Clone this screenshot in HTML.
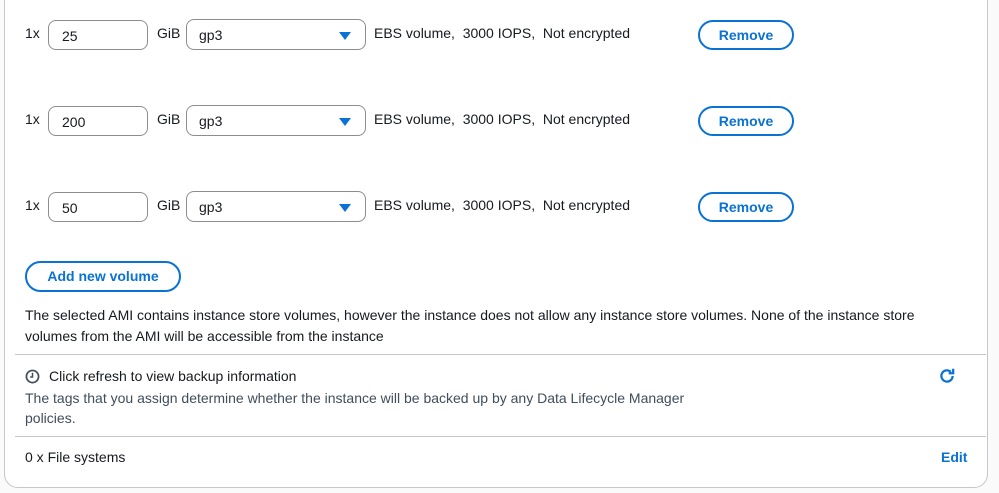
<!DOCTYPE html><html><head><style>
body{margin:0;width:999px;height:493px;background:#fafafa;font-family:"Liberation Sans",sans-serif;font-size:14px;color:#16191f;position:relative;overflow:hidden}
.card{position:absolute;left:4px;top:-20px;width:982px;height:506px;background:#fff;border:1px solid #c6c6cd;border-radius:14px}
.a{position:absolute}
.inp{position:absolute;width:100px;height:30px;border:1px solid #8c8c94;border-radius:8px;box-sizing:border-box;padding-left:13px;line-height:30px}
.sel{position:absolute;width:180px;height:31px;border:1px solid #8c8c94;border-radius:8px;box-sizing:border-box;padding-left:12px;line-height:31px}
.tri{position:absolute;right:14px;top:12px;width:0;height:0;border-left:6px solid transparent;border-right:6px solid transparent;border-top:8px solid #0972d3}
.btn{position:absolute;height:30px;border:2px solid #0972d3;border-radius:16px;box-sizing:border-box;color:#0972d3;font-weight:bold;text-align:center;line-height:26px;font-size:14px}
.hr{position:absolute;left:15px;width:971px;height:1px;background:#c6c6cd}
.g{color:#414d5c}
</style></head><body>
<div class="card"></div>
<div class="a" style="left:25px;top:25px">1x</div><div class="inp" style="left:48px;top:20px">25</div><div class="a" style="left:157px;top:25px">GiB</div><div class="sel" style="left:186px;top:19px">gp3<div class="tri"></div></div><div class="a" style="left:374px;top:25px">EBS volume,&nbsp; 3000 IOPS,&nbsp; Not encrypted</div><div class="btn" style="left:698px;top:20px;width:96px">Remove</div>
<div class="a" style="left:25px;top:111px">1x</div><div class="inp" style="left:48px;top:106px">200</div><div class="a" style="left:157px;top:111px">GiB</div><div class="sel" style="left:186px;top:105px">gp3<div class="tri"></div></div><div class="a" style="left:374px;top:111px">EBS volume,&nbsp; 3000 IOPS,&nbsp; Not encrypted</div><div class="btn" style="left:698px;top:106px;width:96px">Remove</div>
<div class="a" style="left:25px;top:197px">1x</div><div class="inp" style="left:48px;top:192px">50</div><div class="a" style="left:157px;top:197px">GiB</div><div class="sel" style="left:186px;top:191px">gp3<div class="tri"></div></div><div class="a" style="left:374px;top:197px">EBS volume,&nbsp; 3000 IOPS,&nbsp; Not encrypted</div><div class="btn" style="left:698px;top:192px;width:96px">Remove</div>
<div class="btn" style="left:25px;top:261px;width:156px;height:31px;line-height:27px">Add new volume</div>
<div class="a" style="left:25px;top:305px;line-height:21px;width:930px">The selected AMI contains instance store volumes, however the instance does not allow any instance store volumes. None of the instance store volumes from the AMI will be accessible from the instance</div>
<div class="hr" style="top:354px"></div>
<svg class="a" style="left:25px;top:369px" width="15" height="15" viewBox="0 0 16 16"><circle cx="8" cy="8" r="6.5" fill="none" stroke="#414d5c" stroke-width="1.8"/><path d="M8 4v4.5h-2.5" fill="none" stroke="#414d5c" stroke-width="1.6"/></svg>
<div class="a" style="left:49px;top:368px">Click refresh to view backup information</div>
<div class="a g" style="left:25px;top:388px;line-height:20px;width:690px">The tags that you assign determine whether the instance will be backed up by any Data Lifecycle Manager policies.</div>
<svg class="a" style="left:938px;top:367px" width="18" height="18" viewBox="0 0 16 16"><path d="M13 8a5 5 0 1 1-1.6-3.7" fill="none" stroke="#0972d3" stroke-width="2"/><path d="M13.5 1.5v4h-4" fill="none" stroke="#0972d3" stroke-width="2"/></svg>
<div class="hr" style="top:436px"></div>
<div class="a" style="left:25px;top:449px">0 x File systems</div>
<div class="a" style="left:941px;top:449px;color:#0972d3;font-weight:bold">Edit</div>
</body></html>
